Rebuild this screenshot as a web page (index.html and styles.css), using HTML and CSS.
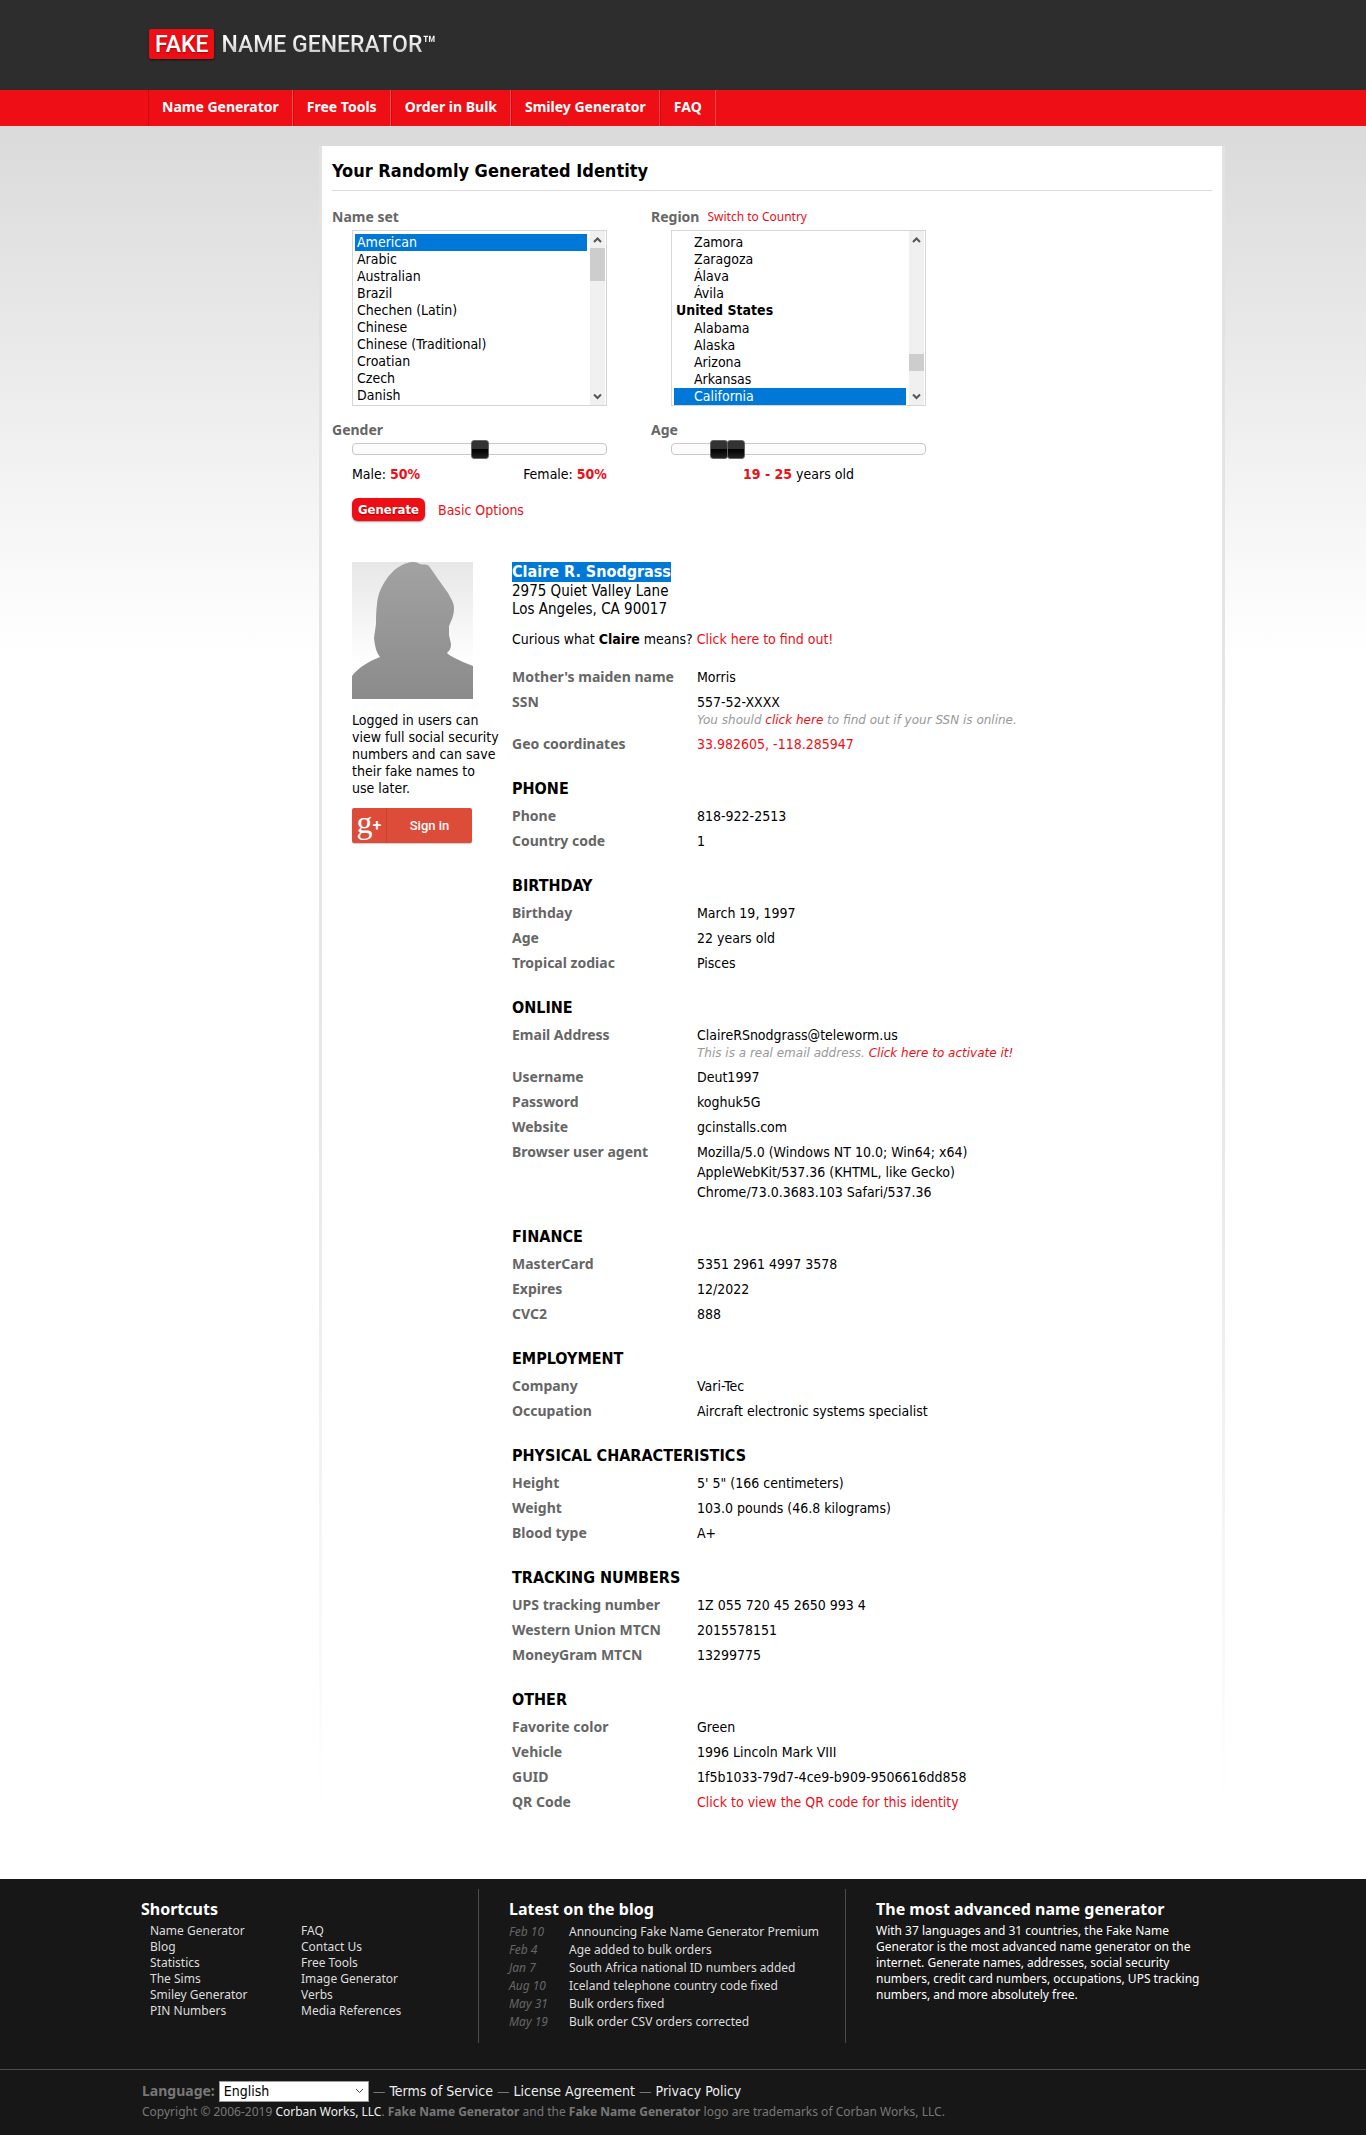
FILE: index.html
```html
<!DOCTYPE html>
<html lang="en">
<head>
<meta charset="utf-8">
<title>Fake Name Generator</title>
<meta name="viewport" content="width=device-width, initial-scale=1">
<link rel="stylesheet" href="styles.css">
</head>
<body>
<header class="header">
  <div class="wrap header-inner">
    <a class="logo" href="#"><span class="logo-box">FAKE</span><span class="logo-text">NAME GENERATOR™</span></a>
  </div>
</header>
<nav class="nav">
  <ul class="wrap nav-list">
    <li><a href="#">Name Generator</a></li>
    <li><a href="#">Free Tools</a></li>
    <li><a href="#">Order in Bulk</a></li>
    <li><a href="#">Smiley Generator</a></li>
    <li><a href="#">FAQ</a></li>
  </ul>
</nav>
<main class="page">
  <div class="wrap page-inner">
    <div class="card-edge">
      <div class="card">
        <h1 class="title">Your Randomly Generated Identity</h1>
        <form class="options">
          <div class="option-grid">
            <div class="field">
              <div class="field-head"><label for="nameset">Name set</label></div>
              <div class="listbox">
                <select id="nameset" size="10">
                  <option selected>American</option><option>Arabic</option><option>Australian</option><option>Brazil</option><option>Chechen (Latin)</option><option>Chinese</option><option>Chinese (Traditional)</option><option>Croatian</option><option>Czech</option><option>Danish</option><option>Dutch</option><option>England/Wales</option><option>Eritrean</option><option>Finnish</option><option>French</option><option>German</option><option>Greenland</option><option>Hispanic</option><option>Hobbit</option><option>Hungarian</option><option>Icelandic</option><option>Igbo</option><option>Italian</option><option>Japanese</option><option>Japanese (Anglicized)</option><option>Klingon</option><option>Ninja</option><option>Norwegian</option><option>Persian</option><option>Polish</option><option>Russian</option><option>Russian (Cyrillic)</option><option>Scottish</option><option>Slovenian</option><option>Swedish</option><option>Thai</option><option>Vietnamese</option>
                </select>
                <div class="bar" aria-hidden="true">
                  <svg width="15" height="17" viewBox="0 0 15 17"><path d="M4 11l3.500-3.500L11 11"/></svg>
                  <div class="track"><div class="thumb thumb-names"></div></div>
                  <svg width="15" height="17" viewBox="0 0 15 17"><path d="M4 6.500l3.500 3.500L11 6.500"/></svg>
                </div>
              </div>
            </div>
            <div class="field">
              <div class="field-head"><label for="region">Region</label><a class="switch" href="#">Switch to Country</a></div>
              <div class="listbox listbox-groups">
                <select id="region" size="10">
                  <optgroup label="Spain"><option>Albacete</option><option>Alicante</option><option>Almería</option><option>Asturias</option><option>Badajoz</option><option>Barcelona</option><option>Burgos</option><option>Cádiz</option><option>Cantabria</option><option>Córdoba</option><option>Cuenca</option><option>Girona</option><option>Granada</option><option>Huelva</option><option>Huesca</option><option>Jaén</option><option>León</option><option>Madrid</option><option>Málaga</option><option>Murcia</option><option>Navarra</option><option>Salamanca</option><option>Segovia</option><option>Sevilla</option><option>Soria</option><option>Toledo</option><option>Valencia</option><option>Valladolid</option><option>Zamora</option><option>Zaragoza</option><option>Álava</option><option>Ávila</option></optgroup>
                  <optgroup label="United States"><option>Alabama</option><option>Alaska</option><option>Arizona</option><option>Arkansas</option><option selected>California</option><option>Colorado</option><option>Connecticut</option><option>Delaware</option><option>Florida</option><option>Georgia</option><option>Hawaii</option><option>Idaho</option><option>Illinois</option><option>Indiana</option><option>Iowa</option><option>Kansas</option><option>Kentucky</option></optgroup>
                </select>
                <div class="bar" aria-hidden="true">
                  <svg width="15" height="17" viewBox="0 0 15 17"><path d="M4 11l3.500-3.500L11 11"/></svg>
                  <div class="track"><div class="thumb thumb-regions"></div></div>
                  <svg width="15" height="17" viewBox="0 0 15 17"><path d="M4 6.500l3.500 3.500L11 6.500"/></svg>
                </div>
              </div>
            </div>
            <div class="field">
              <div class="field-head"><label for="gender">Gender</label></div>
              <div class="slider"><input type="range" id="gender" min="0" max="100" value="50"></div>
              <div class="readout"><span>Male: <b>50%</b></span><span>Female: <b>50%</b></span></div>
            </div>
            <div class="field">
              <div class="field-head"><label for="age-min">Age</label></div>
              <div class="slider slider-double">
                <input type="range" id="age-min" min="5" max="90" value="19">
                <input type="range" class="upper" aria-label="Maximum age" min="5" max="90" value="25">
              </div>
              <div class="readout readout-center"><span><b>19 - 25</b> years old</span></div>
            </div>
          </div>
          <div class="actions">
            <button class="generate" type="button">Generate</button>
            <a href="#">Basic Options</a>
          </div>
        </form>
        <div class="profile">
          <aside class="side">
            <svg class="avatar" width="121" height="137" viewBox="0 0 121 137" role="img" aria-label="Silhouette of a woman">
              <defs>
                <linearGradient id="sky" x1="0" y1="0" x2="0" y2="1"><stop offset="0" stop-color="#e7e7e7"/><stop offset=".75" stop-color="#fff"/></linearGradient>
                <linearGradient id="body" x1="0" y1="0" x2="0" y2="1"><stop offset="0" stop-color="#a2a2a2"/><stop offset="1" stop-color="#8b8b8b"/></linearGradient>
              </defs>
              <path fill="url(#sky)" d="M0 0h121v137H0z"/>
              <path fill="url(#body)" d="M0 137V114C6 106 17 99 28 95C24 90 23 84 22 76L24 62C24 56 24 50 25 42C26 33 28 28 32 21C36 14 42 7 50 3C57 0 61-1 66 1C70 4 74 1 77 4L86 17L96 31C98 35 102 40 102 46C102 51 101 54 100 57L97 64L97 73L99 82C99 87 97 89 95 91C99 95 106 97 111 100L121 104V137Z"/>
            </svg>
            <p class="note">Logged in users can view full social security numbers and can save their fake names to<br>use later.</p>
            <button class="signin" type="button"><span class="signin-mark"><span class="g">g</span><span class="plus">+</span></span><span class="signin-text">Sign in</span></button>
          </aside>
          <div class="info">
            <h2 class="name"><mark>Claire R. Snodgrass</mark></h2>
            <div class="address">2975 Quiet Valley Lane<br>Los Angeles, CA 90017</div>
            <p class="curious">Curious what <b>Claire</b> means? <a href="#">Click here to find out!</a></p>
            <dl class="rows">
              <dt>Mother's maiden name</dt><dd>Morris</dd>
              <dt>SSN</dt><dd>557-52-XXXX<div class="hint">You should <a href="#">click here</a> to find out if your SSN is online.</div></dd>
              <dt>Geo coordinates</dt><dd><a href="#">33.982605, -118.285947</a></dd>
            </dl>
            <h3>PHONE</h3>
            <dl class="rows">
              <dt>Phone</dt><dd>818-922-2513</dd>
              <dt>Country code</dt><dd>1</dd>
            </dl>
            <h3>BIRTHDAY</h3>
            <dl class="rows">
              <dt>Birthday</dt><dd>March 19, 1997</dd>
              <dt>Age</dt><dd>22 years old</dd>
              <dt>Tropical zodiac</dt><dd>Pisces</dd>
            </dl>
            <h3>ONLINE</h3>
            <dl class="rows">
              <dt>Email Address</dt><dd>ClaireRSnodgrass@teleworm.us<div class="hint">This is a real email address. <a href="#">Click here to activate it!</a></div></dd>
              <dt>Username</dt><dd>Deut1997</dd>
              <dt>Password</dt><dd>koghuk5G</dd>
              <dt>Website</dt><dd>gcinstalls.com</dd>
              <dt>Browser user agent</dt><dd>Mozilla/5.0 (Windows NT 10.0; Win64; x64)<br>AppleWebKit/537.36 (KHTML, like Gecko)<br>Chrome/73.0.3683.103 Safari/537.36</dd>
            </dl>
            <h3>FINANCE</h3>
            <dl class="rows">
              <dt>MasterCard</dt><dd>5351 2961 4997 3578</dd>
              <dt>Expires</dt><dd>12/2022</dd>
              <dt>CVC2</dt><dd>888</dd>
            </dl>
            <h3>EMPLOYMENT</h3>
            <dl class="rows">
              <dt>Company</dt><dd>Vari-Tec</dd>
              <dt>Occupation</dt><dd>Aircraft electronic systems specialist</dd>
            </dl>
            <h3>PHYSICAL CHARACTERISTICS</h3>
            <dl class="rows">
              <dt>Height</dt><dd>5' 5" (166 centimeters)</dd>
              <dt>Weight</dt><dd>103.0 pounds (46.8 kilograms)</dd>
              <dt>Blood type</dt><dd>A+</dd>
            </dl>
            <h3>TRACKING NUMBERS</h3>
            <dl class="rows">
              <dt>UPS tracking number</dt><dd>1Z 055 720 45 2650 993 4</dd>
              <dt>Western Union MTCN</dt><dd>2015578151</dd>
              <dt>MoneyGram MTCN</dt><dd>13299775</dd>
            </dl>
            <h3>OTHER</h3>
            <dl class="rows">
              <dt>Favorite color</dt><dd>Green</dd>
              <dt>Vehicle</dt><dd>1996 Lincoln Mark VIII</dd>
              <dt>GUID</dt><dd>1f5b1033-79d7-4ce9-b909-9506616dd858</dd>
              <dt>QR Code</dt><dd><a href="#">Click to view the QR code for this identity</a></dd>
            </dl>
          </div>
        </div>
      </div>
    </div>
  </div>
</main>
<footer class="footer">
  <div class="wrap footer-cols">
    <section class="footer-col shortcuts">
      <h2>Shortcuts</h2>
      <div class="link-cols">
        <ul><li><a href="#">Name Generator</a></li><li><a href="#">Blog</a></li><li><a href="#">Statistics</a></li><li><a href="#">The Sims</a></li><li><a href="#">Smiley Generator</a></li><li><a href="#">PIN Numbers</a></li></ul>
        <ul><li><a href="#">FAQ</a></li><li><a href="#">Contact Us</a></li><li><a href="#">Free Tools</a></li><li><a href="#">Image Generator</a></li><li><a href="#">Verbs</a></li><li><a href="#">Media References</a></li></ul>
      </div>
    </section>
    <section class="footer-col blog">
      <h2>Latest on the blog</h2>
      <ul class="posts">
        <li><i>Feb 10</i><a href="#">Announcing Fake Name Generator Premium</a></li>
        <li><i>Feb 4</i><a href="#">Age added to bulk orders</a></li>
        <li><i>Jan 7</i><a href="#">South Africa national ID numbers added</a></li>
        <li><i>Aug 10</i><a href="#">Iceland telephone country code fixed</a></li>
        <li><i>May 31</i><a href="#">Bulk orders fixed</a></li>
        <li><i>May 19</i><a href="#">Bulk order CSV orders corrected</a></li>
      </ul>
    </section>
    <section class="footer-col about">
      <h2>The most advanced name generator</h2>
      <p>With 37 languages and 31 countries, the Fake Name<br>Generator is the most advanced name generator on the<br>internet. Generate names, addresses, social security<br>numbers, credit card numbers, occupations, UPS tracking<br>numbers, and more absolutely free.</p>
    </section>
  </div>
  <div class="footer-bottom">
    <div class="wrap legal">
      <div class="legal-row">
        <label for="lang">Language:</label>
        <select id="lang" class="lang"><option>English</option></select>
        <span>— <a href="#">Terms of Service</a> — <a href="#">License Agreement</a> — <a href="#">Privacy Policy</a></span>
      </div>
      <p class="copyright">Copyright © 2006-2019 <a href="#">Corban Works, LLC</a>. <b>Fake Name Generator</b> and the <b>Fake Name Generator</b> logo are trademarks of Corban Works, LLC.</p>
    </div>
  </div>
</footer>
</body>
</html>
```
FILE: styles.css
```css
:root {
  --text: "DejaVu Sans Condensed", "Noto Sans", sans-serif;
  --label: "Noto Sans", sans-serif;
  --red: #ee0e15;
}

* { box-sizing: border-box; }

body {
  margin: 0;
  background: #fff;
  color: #000;
  font: 14px/20px var(--text);
}

h1, h2, h3, p, ul, dl, dd { margin: 0; padding: 0; }
ul { list-style: none; }
a { color: var(--red); text-decoration: none; }

.wrap { width: 100%; max-width: 1084px; margin: 0 auto; }

/* Header */
.header { background: #2d2d2d; }
.header-inner { padding: 29px 8px 31px; }
.logo { display: inline-flex; align-items: center; gap: 7px; font: 500 23px/28px Roboto, sans-serif; }
.logo-box {
  padding: 2px 6px 0;
  border-radius: 2px;
  background: var(--red);
  color: #fff;
  text-shadow: 0 1px 2px #60000388;
  box-shadow: 0 1px 2px #111;
}
.logo-text {
  padding-top: 2px;
  background: linear-gradient(#fff 25%, #ccc 75%);
  background-clip: text;
  -webkit-background-clip: text;
  color: transparent;
}

/* Navigation */
.nav { background: var(--red); }
.nav-list { display: flex; padding: 0 7px; }
.nav-list li { border-left: 1px solid #cf0a10; border-right: 1px solid #f8494e; }
.nav-list a { display: block; padding: 0 13px 2px; color: #fff; font-family: var(--label); font-weight: bold; line-height: 34px; }

/* Page and card */
.page { background: linear-gradient(#dadada, #fff) 0 0 / 100% 530px no-repeat; padding: 20px 0 61px; }
.page-inner { display: flex; justify-content: flex-end; }
.card-edge { width: 100%; max-width: 906px; padding: 0 3px; background: linear-gradient(#e2e2e2, #e8e8e8 60%, #fff); }
.card { background: #fff; padding: 10px 10px 6px; }
.title { padding-bottom: 4px; border-bottom: 1px solid #dcdcdc; font-size: 18px; line-height: 30px; }

/* Options */
.options { padding-top: 16px; }
.option-grid { display: grid; grid-template-columns: 275px 275px; column-gap: 44px; row-gap: 14px; }
.field-head { display: flex; gap: 8px; margin-bottom: 3px; font-family: var(--label); font-weight: bold; color: #666; }
.field-head .switch { font-size: 12px; font-weight: normal; }

.listbox {
  display: flex;
  width: 255px;
  height: 176px;
  margin-left: 20px;
  padding-right: 1px;
  border: 1px solid #d6d6d6;
  background: #fff;
}
.listbox select {
  flex: 1;
  height: 174px;
  padding: 3px 3px 1px 2px;
  border: 0;
  background: none;
  font: inherit;
  color: #000;
  outline: 0;
}
.listbox option { height: 17px; min-height: 0; padding: 0 2px; font-size: 14px; line-height: 17px; }
.listbox optgroup { font-size: 14px; line-height: 17px; }
.listbox-groups select { padding-bottom: 0; }
.listbox-groups option { padding-left: 20px; }
.listbox option:checked { background: linear-gradient(#0078d7, #0078d7); color: #fff; }
.bar { display: flex; flex-direction: column; width: 15px; background: #f0f0f0; }
.bar path { fill: none; stroke: #555; stroke-width: 2; }
.track { flex: 1; }
.thumb { background: #cdcdcd; }
.thumb-names { height: 33px; }
.thumb-regions { height: 17px; margin-top: 106px; }

.slider { position: relative; width: 255px; height: 12px; margin-left: 20px; border: 1px solid #c8c8c8; border-radius: 4px; background: #fcfcfc; }
.slider input { position: absolute; inset: -5px -1px; width: 255px; height: 20px; margin: 0; background: none; appearance: none; }
.slider input::-webkit-slider-thumb {
  appearance: none;
  width: 18px;
  height: 19px;
  border: 1px solid #666;
  border-radius: 3px;
  background: linear-gradient(#333 50%, #000 50%, #222);
  pointer-events: auto;
}
.slider-double input { pointer-events: none; }
.readout { display: flex; justify-content: space-between; margin: 9px 0 0 20px; }
.readout-center { justify-content: center; }
.readout b { color: var(--red); }

.actions { display: flex; align-items: center; gap: 13px; margin: 14px 0 0 20px; }
.generate {
  height: 23px;
  padding: 0 6px;
  border: 0;
  border-radius: 6px;
  background: var(--red);
  box-shadow: 0 1px 2px #999;
  color: #fff;
  font: bold 13px/23px var(--text);
  text-shadow: 0 1px 1px #a00;
}

/* Identity */
.profile { display: flex; gap: 10px; margin: 41px 0 0 20px; }
.side { width: 150px; }
.avatar { display: block; }
.note { margin: 13px 0 11px; line-height: 17px; }
.signin {
  display: flex;
  width: 120px;
  height: 35px;
  padding: 0;
  border: 0;
  border-radius: 2px;
  background: #dd4b39;
  box-shadow: 0 1px 1px #ccc;
  color: #fff;
}
.signin-mark { display: flex; align-items: center; justify-content: center; width: 35px; height: 35px; border-right: 1px solid #c94434; }
.g { font: 32px/28px "Liberation Serif", serif; height: 35px; }
.plus { font: 500 16px/34px Roboto, sans-serif; }
.signin-text { flex: 1; font: 500 13px/35px Roboto, sans-serif; }

.info { flex: 1; }
.name { font-size: 16px; line-height: 20px; }
.name mark { display: inline-block; background: #0078d7; color: #fff; }
.address { font-size: 15px; line-height: 18px; }
.curious { margin: 11px 0 18px; }
.rows { display: grid; grid-template-columns: 185px 1fr; row-gap: 5px; }
.rows dt { font-family: var(--label); font-weight: bold; color: #666; }
.hint { font: italic 12px/17px "DejaVu Sans", sans-serif; color: #999; }
.info h3 { margin: 25px 0 7px; font-size: 16px; line-height: 20px; }

/* Footer */
.footer { background: #171717; color: #fff; font: 12px/16px var(--label); }
.footer a { color: #ddd; }
.footer-cols { display: flex; padding: 10px 0 26px; }
.footer-col { height: 154px; padding-top: 10px; }
.footer-col + .footer-col { border-left: 1px solid #4c4c4c; padding-left: 30px; }
.shortcuts { width: 337px; }
.blog { width: 367px; }
.about { flex: 1; }
.footer h2 { margin-bottom: 4px; font-size: 16px; line-height: 20px; }
.link-cols { display: flex; padding-left: 9px; }
.link-cols ul { width: 151px; }
.posts li { display: flex; line-height: 18px; }
.posts i { width: 60px; color: #666; }
.footer-bottom { border-top: 1px solid #4c4c4c; }
.legal { padding: 10px 1px 14px; color: #777; }
.legal-row { display: flex; align-items: center; gap: 4px; font: 14px/22px var(--text); }
.legal-row label { font-family: var(--label); font-weight: bold; }
.legal a { color: #eee; }
.lang {
  width: 150px;
  height: 21px;
  padding: 0 4px;
  border: 1px solid #999;
  border-radius: 0;
  appearance: none;
  background: #fff url("data:image/svg+xml,%3Csvg xmlns='http://www.w3.org/2000/svg' viewBox='0 0 9 6'%3E%3Cpath d='M1 1l3.500 3.500L8 1' fill='none' stroke='%23444'/%3E%3C/svg%3E") right 4px center / 9px 6px no-repeat;
  color: #000;
  font: 14px var(--text);
}
.copyright { margin-top: 1px; line-height: 18px; }
```
